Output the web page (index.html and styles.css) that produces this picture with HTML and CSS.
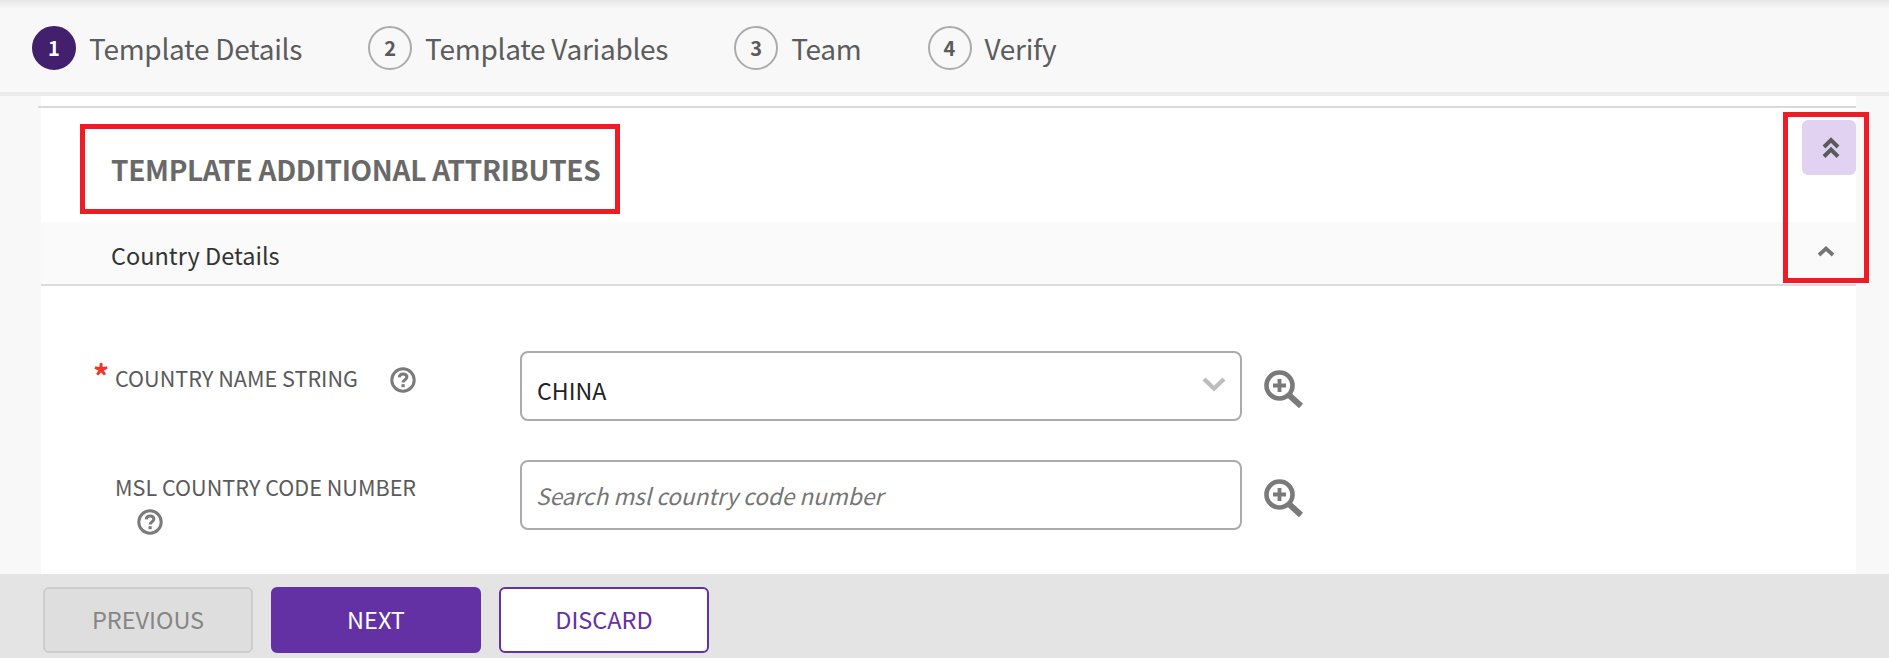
FILE: index.html
```html
<!DOCTYPE html>
<html lang="en">
<head>
<meta charset="utf-8">
<title>Template Additional Attributes</title>
<link rel="stylesheet" href="styles.css">
</head>
<body>
<div class="page">
  <header class="stepper">
    <div class="step active"><span class="num">1</span><span class="step-label">Template Details</span></div>
    <div class="step"><span class="num">2</span><span class="step-label">Template Variables</span></div>
    <div class="step"><span class="num">3</span><span class="step-label">Team</span></div>
    <div class="step"><span class="num">4</span><span class="step-label">Verify</span></div>
  </header>
  <main class="main">
    <div class="panel">
      <div class="rule"></div>
      <div class="title-row">
        <h1 class="title">TEMPLATE ADDITIONAL ATTRIBUTES</h1>
        <button class="collapse-all" type="button" aria-label="Collapse all">
          <svg width="18" height="22" viewBox="0 0 18 22"><path d="M2 10 9 3 16 10M2 19.500 9 12.500l7 7" fill="none" stroke="#5a5a5a" stroke-width="4"/></svg>
        </button>
      </div>
      <div class="section-head">
        <span class="section-name">Country Details</span>
        <svg class="section-caret" width="18" height="12" viewBox="0 0 18 12"><path d="M2 10 9 3.500 16 10" fill="none" stroke="#757575" stroke-width="3.800"/></svg>
      </div>
      <div class="form">
        <div class="row">
          <label class="label required">COUNTRY NAME STRING&nbsp; <svg class="help" viewBox="0 0 26 26"><circle cx="13" cy="13" r="11.200" fill="none" stroke="#7b7b7b" stroke-width="3"/><path d="M9.200 10.400c.2-2.300 1.800-3.500 3.900-3.500s3.800 1.200 3.800 3.200c0 2.900-3.800 2.800-3.800 5.300" fill="none" stroke="#7b7b7b" stroke-width="3"/><rect x="11.500" y="17.200" width="3.200" height="3" fill="#7b7b7b"/></svg></label>
          <div class="field">
            <span class="value">CHINA</span>
            <svg class="caret" width="24" height="16" viewBox="0 0 24 16"><path d="M2 3 12 12.500 22 3" fill="none" stroke="#bdbdbd" stroke-width="4.400"/></svg>
          </div>
          <svg class="lookup" viewBox="0 0 40 40"><circle cx="15.500" cy="15.500" r="13" fill="none" stroke="#7a7a7a" stroke-width="4.600"/><path d="M9 15.500h13M15.500 9v13" stroke="#7a7a7a" stroke-width="3.800"/><path d="M25.500 25.500 37 36" stroke="#7a7a7a" stroke-width="6"/></svg>
        </div>
        <div class="row">
          <label class="label">MSL COUNTRY CODE NUMBER&nbsp; <svg class="help" viewBox="0 0 26 26"><circle cx="13" cy="13" r="11.200" fill="none" stroke="#7b7b7b" stroke-width="3"/><path d="M9.200 10.400c.2-2.300 1.800-3.500 3.900-3.500s3.800 1.200 3.800 3.200c0 2.900-3.800 2.800-3.800 5.300" fill="none" stroke="#7b7b7b" stroke-width="3"/><rect x="11.500" y="17.200" width="3.200" height="3" fill="#7b7b7b"/></svg></label>
          <div class="field">
            <span class="placeholder">Search msl country code number</span>
          </div>
          <svg class="lookup" viewBox="0 0 40 40"><circle cx="15.500" cy="15.500" r="13" fill="none" stroke="#7a7a7a" stroke-width="4.600"/><path d="M9 15.500h13M15.500 9v13" stroke="#7a7a7a" stroke-width="3.800"/><path d="M25.500 25.500 37 36" stroke="#7a7a7a" stroke-width="6"/></svg>
        </div>
      </div>
    </div>
  </main>
  <footer class="footer">
    <button class="btn btn-prev" type="button">PREVIOUS</button>
    <button class="btn btn-next" type="button">NEXT</button>
    <button class="btn btn-discard" type="button">DISCARD</button>
  </footer>
  <div class="mark mark-title"></div>
  <div class="mark mark-side"></div>
</div>
</body>
</html>
```
FILE: styles.css
```css
* { box-sizing: border-box; }
html, body { margin: 0; padding: 0; }
body {
  font-family: "Noto Sans CJK SC", "Noto Sans", sans-serif;
  color: #5a5a5a;
  background: #f8f8f8;
}
.page {
  position: relative;
  width: 1889px;
  height: 658px;
  display: flex;
  flex-direction: column;
  overflow: hidden;
}
.stepper {
  height: 96px;
  flex: none;
  display: flex;
  align-items: flex-start;
  gap: 66px;
  padding: 26px 0 0 32px;
  background: linear-gradient(#e6e6e6 0, #f8f8f8 9px);
  border-bottom: 4px solid #ebebeb;
}
.step { display: flex; align-items: center; gap: 13px; height: 44px; }
.num {
  width: 44px;
  height: 44px;
  border-radius: 50%;
  border: 2px solid #ababab;
  display: flex;
  align-items: center;
  justify-content: center;
  font-size: 20px;
  font-weight: 700;
  line-height: 1;
  color: #5a5a5a;
}
.active .num { background: #42206e; border-color: #42206e; color: #fff; }
.step-label { font-size: 28px; letter-spacing: -.28px; line-height: 44px; color: #5c5c5c; }
.main {
  flex: 1;
  min-height: 0;
  overflow: hidden;
  padding: 0 33px 0 41px;
}
.panel { background: #fff; height: 100%; padding-top: 10px; }
.rule { height: 2px; margin-left: -3px; background: #dadada; }
.title-row {
  height: 114px;
  display: flex;
  justify-content: space-between;
  align-items: flex-start;
  padding: 12px 0 0 70px;
}
.title {
  margin: 0;
  padding-top: 27px;
  font-size: 28px;
  letter-spacing: -.3px;
  line-height: 44px;
  font-weight: 700;
  color: #696969;
}
.collapse-all {
  width: 54px;
  height: 55px;
  border: 0;
  border-radius: 6px;
  background: #e0d2f0;
  padding: 0 0 0 4px;
  display: flex;
  align-items: center;
  justify-content: center;
}
.section-head {
  height: 64px;
  display: flex;
  align-items: center;
  justify-content: space-between;
  padding: 4px 21px 0 70px;
  background: #fafafa;
  border-bottom: 2px solid #dcdcdc;
}
.section-name { font-size: 23.500px; line-height: 32px; color: #333; }
.section-caret { margin-top: -8px; }
.form {
  padding: 65px 0 0 74px;
  display: flex;
  flex-direction: column;
  gap: 39px;
}
.row { display: flex; align-items: flex-start; }
.label {
  position: relative;
  width: 405px;
  height: 70px;
  flex: none;
  padding: 10px 74px 0 0;
  font-size: 21.600px;
  line-height: 33px;
  color: #5a5a5a;
}
.required::before {
  content: "*";
  position: absolute;
  left: -22px;
  top: 6px;
  font-size: 32px;
  line-height: 36px;
  font-weight: 700;
  color: #f0362c;
}
.help { width: 26px; height: 26px; margin-left: 22px; vertical-align: -6px; }
.field {
  width: 722px;
  height: 70px;
  flex: none;
  border: 2px solid #ababab;
  border-radius: 8px;
  background: #fff;
  padding: 0 12px 0 15px;
  display: flex;
  align-items: center;
  justify-content: space-between;
  font-size: 23.200px;
}
.value { color: #222; padding-top: 8px; line-height: 32px; }
.placeholder {
  color: #757575;
  font-style: italic;
  font-size: 22.600px;
  line-height: 32px;
  margin-left: -1px;
  padding-top: 2px;
}
.caret { margin-top: -4px; margin-right: 2px; }
.lookup { width: 40px; height: 40px; margin: 19px 0 0 22px; flex: none; }
.footer {
  height: 84px;
  flex: none;
  background: #e4e4e4;
  display: flex;
  gap: 18px;
  padding: 13px 0 0 43px;
}
.btn {
  width: 210px;
  height: 66px;
  border-radius: 6px;
  font-family: inherit;
  font-size: 23.500px;
  line-height: 32px;
  padding: 0 0 2px;
}
.btn-prev { background: #dedede; border: 2px solid #cdcdcd; color: #858585; }
.btn-next { background: #6331a3; border: 2px solid #6331a3; color: #fff; }
.btn-discard { background: #fff; border: 2px solid #6331a3; color: #6331a3; }
.mark { position: absolute; border: 5px solid #ef1c25; pointer-events: none; }
.mark-title { left: 80px; top: 124px; width: 540px; height: 90px; }
.mark-side { left: 1783px; top: 112px; width: 86px; height: 171px; }
```
